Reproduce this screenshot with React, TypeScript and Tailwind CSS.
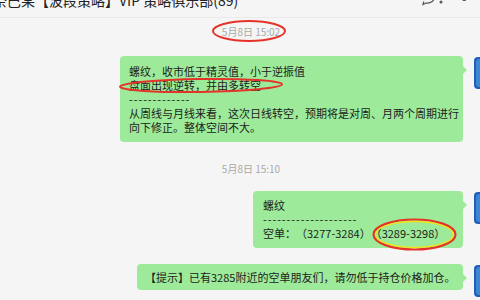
import React from "react";

const font = { fontFamily: '"Noto Sans CJK SC", "Noto Sans", sans-serif' };

function Avatar() {
  return (
    <div className="ml-[11px] mt-[1px] h-[32px] w-[32px] shrink-0 rounded-[4px] bg-[#1f5fb8] p-[2px]">
      <div className="flex h-full w-full items-center justify-center rounded-[3px] bg-[#3d86d6]">
        <div className="h-[20px] w-[20px] rounded-full border-[3px] border-white/90" />
      </div>
    </div>
  );
}

function Bubble({
  children,
  className,
}: {
  children: React.ReactNode;
  className: string;
}) {
  return (
    <div className="flex items-start justify-end mr-[-26px]">
      <div className={`relative rounded-[4px] bg-[#9deb9a] text-[11px] leading-[14px] text-[#1c1c1c] whitespace-nowrap [text-spacing-trim:space-all] ${className}`}>
        {children}
        {/* tail */}
        <span className="absolute right-[-4px] top-[10px] h-0 w-0 border-y-[4px] border-l-[4px] border-y-transparent border-l-[#9deb9a]" />
      </div>
      <Avatar />
    </div>
  );
}

function Time({ text, className }: { text: string; className: string }) {
  return (
    <div className={`flex h-[14px] justify-center pl-[22px] text-[10px] leading-[14px] text-[#a9a9a9] ${className}`}>
      {text}
    </div>
  );
}

export default function App() {
  return (
    <div
      className="relative h-[300px] w-[480px] overflow-hidden bg-[#f5f5f5]"
      style={font}
    >
      {/* header */}
      <div className="relative h-[18px] border-b border-[#e9e9e9]">
        <div className="absolute left-[-7px] top-[-8px] whitespace-nowrap text-[14px] leading-[17px] text-[#222]">
          奈巴某【波段策略】VIP 策略俱乐部(89)
        </div>
        <svg className="absolute left-[420px] top-[-8px]" width="60" height="14" viewBox="0 0 60 14" fill="none" stroke="#555" strokeWidth="1.2">
          <path d="M3 2 a7 5 0 1 1 3 9 l-3 1.5 l0.8 -3" />
          <circle cx="21" cy="10" r="0.9" fill="#555" />
          <path d="M38 2 l5 6 a2 2 0 0 0 3 -2.5 l-6 -7" />
        </svg>
      </div>

      <Time text="5月8日 15:02" className="mt-[7px]" />

      <div className="mt-[17px]">
        <Bubble className="w-[343px] px-[9px] py-[8px]">
          <div>螺纹，收市低于精灵值，小于逆振值</div>
          <div>盘面出现逆转，并由多转空</div>
          <div className="tracking-[0.9px]">-------------</div>
          <div>从周线与月线来看，这次日线转空，预期将是对周、月两个周期进行</div>
          <div>向下修正。整体空间不大。</div>
        </Bubble>
      </div>

      <Time text="5月8日 15:10" className="mt-[20px]" />

      <div className="mt-[15px]">
        <Bubble className="w-[210px] pl-[10px] pr-[8px] pt-[7px] pb-[8px]">
          <div>螺纹</div>
          <div className="tracking-[0.9px]">--------------------</div>
          <div>空单：（3277-3284）（3289-3298）</div>
        </Bubble>
      </div>

      <div className="mt-[16px]">
        <Bubble className="w-[326px] px-[8px] py-[6px]">
          <div>【提示】已有3285附近的空单朋友们，请勿低于持仓价格加仓。</div>
        </Bubble>
      </div>

      {/* red annotation marks */}
      <svg className="pointer-events-none absolute left-0 top-0" width="480" height="300" fill="none">
        <ellipse cx="249" cy="31" rx="36" ry="10" stroke="#e5332a" strokeWidth="2" />
        <ellipse cx="201" cy="85.5" rx="81" ry="6.5" stroke="#e5332a" strokeWidth="2" transform="rotate(-0.8 201 85.5)" />
        <ellipse cx="414.5" cy="234.5" rx="41" ry="15" stroke="#e5332a" strokeWidth="2.2" />
        <ellipse cx="414.5" cy="234.5" rx="39" ry="13" stroke="#f2e21a" strokeWidth="1.4" />
      </svg>
    </div>
  );
}
